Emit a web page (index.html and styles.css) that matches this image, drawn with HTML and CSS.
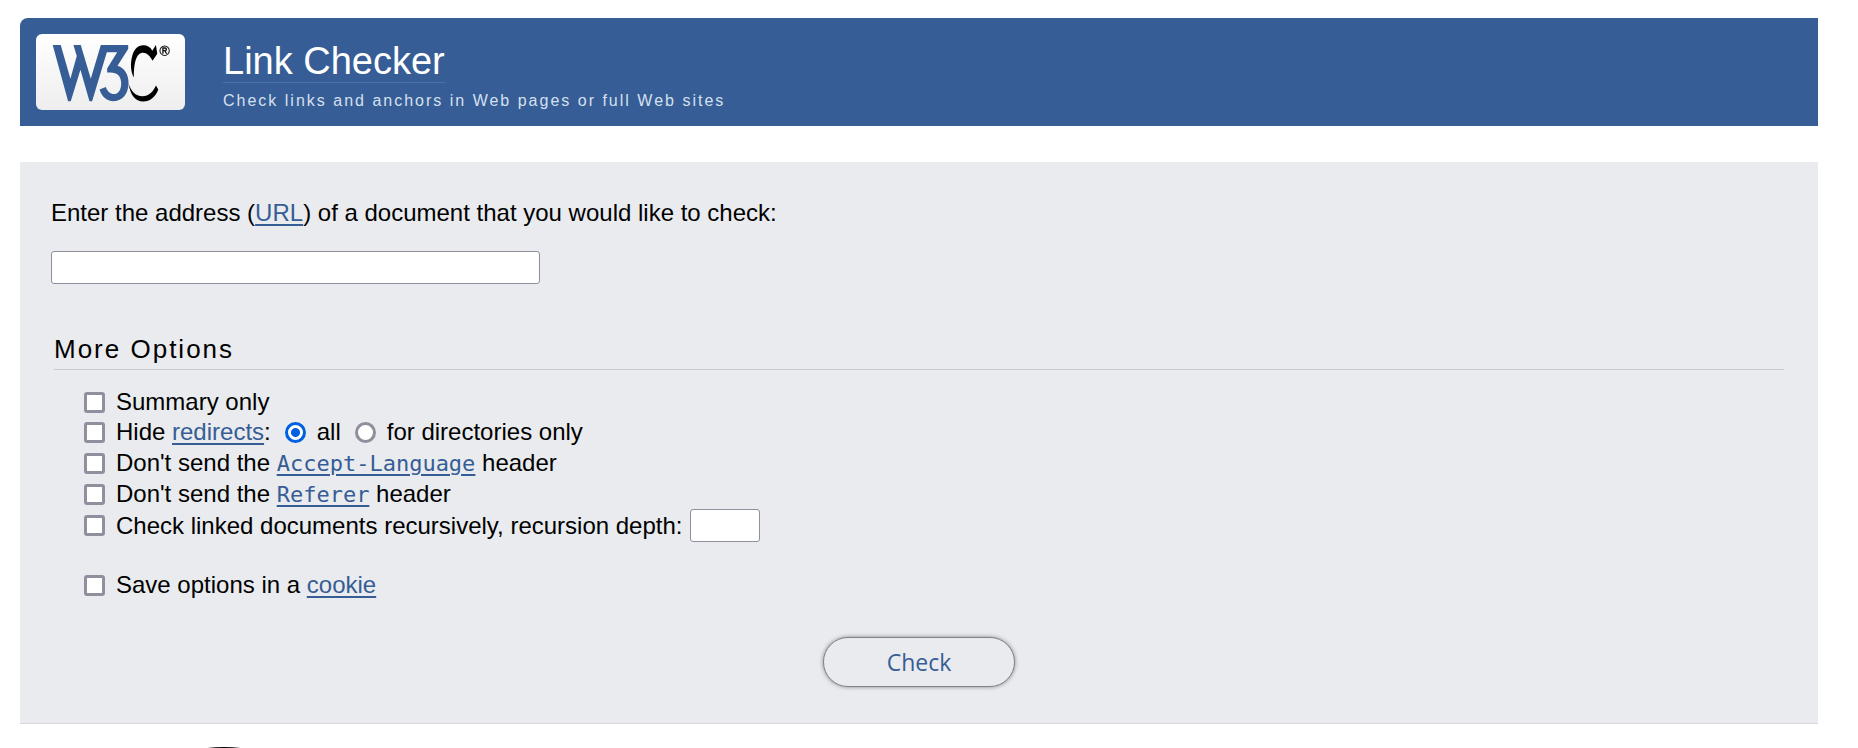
FILE: index.html
```html
<!DOCTYPE html>
<html lang="en">
<head>
<meta charset="utf-8">
<title>W3C Link Checker</title>
<link rel="stylesheet" href="styles.css">
</head>
<body>
<header class="banner">
  <a class="logo" href="#" aria-label="W3C">
    <svg viewBox="0 0 446 228" aria-hidden="true">
      <g transform="translate(-109 -102)">
        <path fill="#365d95" d="M159 135H183L212 236L231 168L221 135H243L273 236L303 135H385V147L353 197C375 203 386 225 386 248C386 282 367 303 342 303C322 303 307 292 299 268L318 261C323 275 331 282 342 282C355 282 364 269 364 250C364 228 352 217 332 217H322V205L352 157H321L277 303H269L242 209L213 303H205Z"/>
        <path d="M468 135L472 161L458 182C450 167 441 158 429 158C414 158 402 175 402 232C392 215 391 190 397 168C403 147 414 136 430 136C443 136 452 142 457 152Z"/>
        <path d="M386 250C394 274 406 287 428 288C446 288 460 275 468 256L475 268C467 290 450 304 430 304C406 304 391 284 386 250Z"/>
        <circle cx="494" cy="152" r="14" fill="none" stroke="#111" stroke-width="3"/>
        <path fill="none" stroke="#111" stroke-width="4" d="M489 161V144H495C501 144 501 152 495 152H489M495 152L500 161"/>
      </g>
    </svg>
  </a>
  <div class="heading">
    <h1 class="title"><a class="title-link" href="#">Link Checker</a></h1>
    <p class="tagline">Check links and anchors in Web pages or full Web sites</p>
  </div>
</header>

<form class="checker">
  <div class="address">
    <label for="uri">Enter the address (<a class="link" href="#">URL</a>) of a document that you would like to check:</label>
    <input class="field field-url" type="text" id="uri">
  </div>

  <section class="options">
    <h2 class="options-title">More Options</h2>
    <div class="rows">
      <div class="row">
        <input class="tick" type="checkbox" id="summary">
        <label for="summary">Summary only</label>
      </div>
      <div class="row">
        <input class="tick" type="checkbox" id="hide">
        <label for="hide">Hide <a class="link" href="#">redirects</a>:</label>
        <input class="tick radio" type="radio" name="type" id="all" checked>
        <label for="all">all</label>
        <input class="tick radio" type="radio" name="type" id="dir">
        <label for="dir">for directories only</label>
      </div>
      <div class="row row-code">
        <input class="tick" type="checkbox" id="lang">
        <label for="lang">Don't send the <a class="link" href="#"><code class="code">Accept-Language</code></a> header</label>
      </div>
      <div class="row">
        <input class="tick" type="checkbox" id="referer">
        <label for="referer">Don't send the <a class="link" href="#"><code class="code">Referer</code></a> header</label>
      </div>
      <div class="row">
        <input class="tick" type="checkbox" id="recursive">
        <label for="recursive">Check linked documents recursively, <span id="depth-label">recursion depth:</span></label>
        <input class="field field-depth" type="text" aria-labelledby="depth-label">
      </div>
      <div class="row row-save">
        <input class="tick" type="checkbox" id="cookie">
        <label for="cookie">Save options in a <a class="link" href="#">cookie</a></label>
      </div>
    </div>
  </section>

  <button class="submit" type="button">Check</button>
</form>

<footer class="footer">
  <svg class="footer-art" viewBox="0 0 40 1" aria-hidden="true"><ellipse cx="20" cy="20" rx="54" ry="20"/></svg>
</footer>
</body>
</html>
```
FILE: styles.css
```css
* {
  box-sizing: border-box;
}

body {
  margin: 18px 40px 0 20px;
  background: #fff;
  color: #000;
  font: 24px/30px "Liberation Sans", Arial, sans-serif;
}

.banner {
  display: flex;
  align-items: flex-start;
  gap: 38px;
  padding: 16px 16px 15px;
  border-top-left-radius: 8px;
  background: #365d95;
}

.logo {
  display: block;
  width: 149px;
  border-radius: 6px;
  background: linear-gradient(#fff, #eee);
}

.logo svg {
  display: block;
  width: 100%;
}

.title {
  margin: 6px 0 0;
  font-size: 38px;
  font-weight: normal;
  line-height: 42px;
}

.title-link {
  display: inline-block;
  border-bottom: 1px solid #4f72a5;
  color: #fff;
  text-decoration: none;
}

.tagline {
  margin: 8px 0 0;
  color: #d5e0f0;
  font-size: 16px;
  line-height: 20px;
  letter-spacing: 2px;
}

.checker {
  display: flex;
  flex-direction: column;
  margin-top: 36px;
  padding: 36px 34px;
  border-bottom: 1px solid #d8d8dc;
  background: #e9ebee;
}

.address {
  display: flex;
  flex-direction: column;
  gap: 23px;
  margin-left: -3px;
}

.link {
  color: #365d95;
  text-decoration: underline;
  text-decoration-thickness: 2px;
  text-underline-offset: 3px;
}

.field {
  height: 33px;
  padding: 2px 4px;
  border: 1px solid #8f8f9d;
  border-radius: 3px;
  background: #fff;
  font: inherit;
}

.field-url {
  width: 489px;
}

.field-depth {
  width: 70px;
}

.options-title {
  margin: 49px 0 0;
  padding-bottom: 4px;
  border-bottom: 1px solid #c9cace;
  font-size: 26px;
  font-weight: normal;
  line-height: 32px;
  letter-spacing: 2px;
}

.rows {
  padding: 17px 0 0 30px;
}

.row {
  display: flex;
  align-items: center;
}

.row-code {
  height: 32px;
}

.row-save {
  margin-top: 28px;
}

.tick {
  appearance: none;
  flex: none;
  width: 21px;
  height: 21px;
  margin: 0 11px 0 0;
  border: 3px solid #8f8f9d;
  border-radius: 3px;
  background: #fff;
}

.radio {
  margin-left: 14px;
  border-radius: 50%;
}

.radio:checked {
  border-color: #0060df;
  background: radial-gradient(circle, #0060df 4px, #fff 5px);
}

.field-depth {
  margin-left: 7px;
}

.code {
  font: 22px/24px "DejaVu Sans Mono", monospace;
}

.submit {
  align-self: center;
  width: 192px;
  height: 50px;
  margin-top: 37px;
  border: 1px solid #838387;
  border-radius: 25px;
  background: #e9ebee;
  box-shadow: 0 0 4px #88888c;
  color: #365d95;
  font: 23px/30px "Open Sans", "Noto Sans", sans-serif;
}

.footer {
  padding: 23px 0 0 184px;
}

.footer-art {
  display: block;
  width: 40px;
  height: 1px;
}
```
